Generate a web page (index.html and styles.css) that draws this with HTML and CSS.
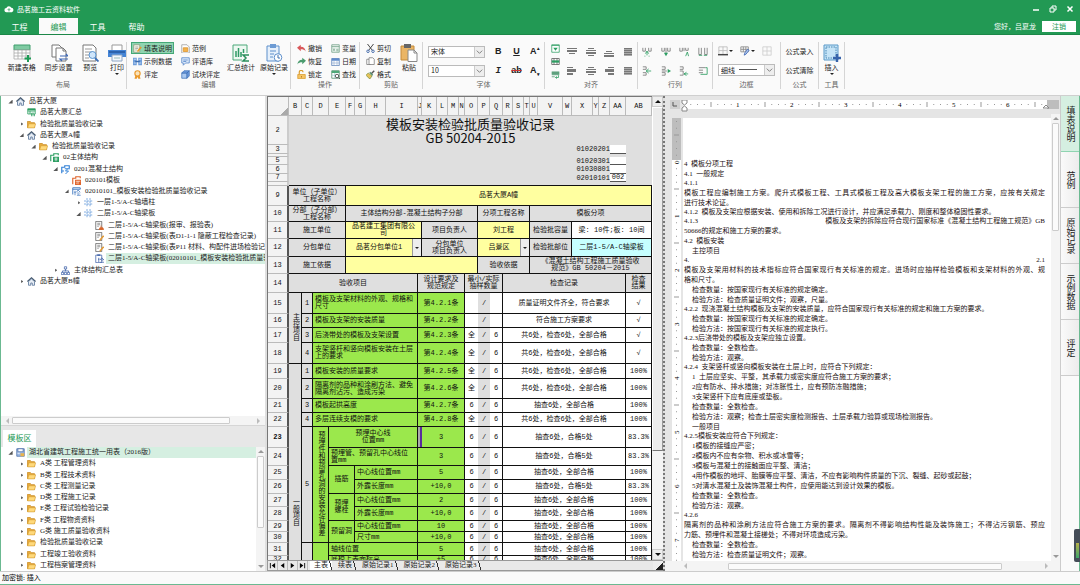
FILE: index.html
```html
<!DOCTYPE html>
<html lang="zh-CN">
<head>
<meta charset="UTF-8">
<meta name="viewport" content="width=device-width, initial-scale=1.0">
<title>品茗施工云资料软件</title>
<link rel="stylesheet" href="styles.css">
</head>
<body>
<svg class="sprite" width="0" height="0" aria-hidden="true">
  <symbol id="i-table" viewBox="0 0 18 18"><path d="M1 1h16v5H1z" fill="#7fcaa2" stroke="#3f9e6c"/><path d="M1 6h16v9H1zM5 6v9M9 6v9M13 6v9M1 9h16M1 12h16" fill="#fff" stroke="#aaa" stroke-width=".8"/><path d="M15 11v7M11.500 14.500h7" stroke="#1d9a55" stroke-width="2"/></symbol>
  <symbol id="i-sync" viewBox="0 0 18 18"><path d="M2 1h7l3 3v9H2z" fill="#fff" stroke="#777"/><path d="M6 4h7l3 3v10H6z" fill="#fff" stroke="#777"/><path d="M13 4v3h3" fill="none" stroke="#777"/><path d="M10 12h8l-2-2M18 15h-8l2 2" fill="none" stroke="#3c66b4" stroke-width="1.200"/></symbol>
  <symbol id="i-preview" viewBox="0 0 18 18"><path d="M2 1h10l3 3v13H2z" fill="#fff" stroke="#777"/><path d="M4 5h7M4 8h8M4 11h5M4 14h4" stroke="#999"/><circle cx="11.500" cy="11" r="3.500" fill="#cfe5fa" stroke="#5a95d2"/><path d="M14 14l3.500 3.500" stroke="#3c70b8" stroke-width="1.800"/></symbol>
  <symbol id="i-print" viewBox="0 0 18 18"><path d="M4 1h10v6H4z" fill="#fff" stroke="#999"/><path d="M0 6h18v7H0z" fill="#4585d6"/><path d="M1 7h16v2H1z" fill="#2d63ad"/><path d="M4 11h10v6H4z" fill="#f4f8fd" stroke="#8ea6c4"/><path d="M6 14h6" stroke="#9bb"/></symbol>
  <symbol id="i-stat" viewBox="0 0 18 18"><path d="M1 1h14v15H1z" fill="#eef8f2" stroke="#4aa878"/><path d="M4 13V7M6.500 13V4M9 13V8M11.500 9V5" stroke="#2f9a65" stroke-width="1.500"/><path d="M10 9h8v9h-8z" fill="#fafafa"/><path d="M17 11h-6l3 3-3 3h6" fill="none" stroke="#2a8f5b" stroke-width="1.500"/></symbol>
  <symbol id="i-clip" viewBox="0 0 18 18"><path d="M2 2h12v15H2z" fill="#e6f0fb" stroke="#5d8fcb"/><path d="M5 0h6v4H5z" fill="#6c9bd4"/><path d="M5 7h6M5 10h4M5 13h3" stroke="#5d8fcb"/><circle cx="13" cy="13.500" r="3.800" fill="#fff" stroke="#5d8fcb"/><path d="M13 11v3h2" fill="none" stroke="#3b6eae"/></symbol>
  <symbol id="i-paste" viewBox="0 0 18 18"><path d="M1 2h13v14H1z" fill="#eab565" stroke="#c48a3a"/><path d="M4 0h7v4H4z" fill="#666"/><path d="M8 6h6l3 3v8.500H8z" fill="#fff" stroke="#888"/><path d="M14 6v3h3" fill="none" stroke="#888"/></symbol>
  <symbol id="i-insert" viewBox="0 0 18 18"><path d="M1 1h14v15H1z" fill="#c5e4f7" stroke="#5898c8"/><path d="M3 3h10v11H3z" fill="none" stroke="#4b88b5" stroke-dasharray="1.500 1"/><path d="M14 10v8M10 14h8" stroke="#3864ab" stroke-width="2.400"/></symbol>
  <symbol id="i-note" viewBox="0 0 12 12"><path d="M1 1h8v10H1z" fill="#f6f6e8" stroke="#8b9a7e"/><path d="M3 4h4M3 6h4M3 8h2" stroke="#999"/><path d="M11 4l-5 6" stroke="#e59a2c" stroke-width="2"/></symbol>
  <symbol id="i-sample" viewBox="0 0 12 12"><path d="M0 1h5v10H0zM7 1h5v10H7z" fill="#6f9edb"/><path d="M1 3h3M1 8h3M8 3h3M8 8h3" stroke="#dce9fa"/><path d="M3 6h6" stroke="#3c6db0" stroke-width="2"/></symbol>
  <symbol id="i-medal" viewBox="0 0 12 12"><circle cx="6" cy="4.500" r="3.500" fill="#fbe3b8" stroke="#e9982b" stroke-width="1.500"/><path d="M3 8L2 11.500h3L6 9l1 2.500h3L9 8" fill="#e9982b"/></symbol>
  <symbol id="i-example" viewBox="0 0 12 12"><path d="M1 1h7l3 3v8H1z" fill="#fff" stroke="#999"/><path d="M3 5h6v5H3z" fill="#f3b24a" stroke="#d98f26"/></symbol>
  <symbol id="i-comment" viewBox="0 0 12 12"><path d="M1 1h10v7H6l-3 3V8H1z" fill="#dce9fa" stroke="#4c7fc4"/><path d="M3 4h6M3 6h4" stroke="#4c7fc4"/></symbol>
  <symbol id="i-cube" viewBox="0 0 12 12"><path d="M1 4h7v7H1z" fill="#a9c8f0" stroke="#3f70b5"/><path d="M1 4l3-3h7L8 4zM8 4l3-3v7l-3 3z" fill="#6c9ade" stroke="#3f70b5"/></symbol>
  <symbol id="i-undo" viewBox="0 0 12 12"><path d="M0 5l5-4v2.500c4 0 6 2 6.500 6.500C10 7.500 8 7 5 7v2.500z" fill="#d9585a"/></symbol>
  <symbol id="i-redo" viewBox="0 0 12 12"><path d="M12 5L7 1v2.500C3 3.500 1 5.500.500 10 2 7.500 4 7 7 7v2.500z" fill="#4a9b6e"/></symbol>
  <symbol id="i-lock" viewBox="0 0 12 12"><path d="M3 6V3a2.500 2.500 0 0 1 5 0" fill="none" stroke="#d99a2b" stroke-width="1.500"/><path d="M1 6h10v5.500H1z" fill="#f6c464" stroke="#d99a2b"/><path d="M6 8v2" stroke="#a86c10"/></symbol>
  <symbol id="i-var" viewBox="0 0 12 12"><path d="M1 1h10v10H1z" fill="#eef6f1" stroke="#6a9c80"/><path d="M1 3.500h10" stroke="#6a9c80"/><path d="M3 6l2 3M5 6L3 9M7 7h3M7 9h3" stroke="#4d8867" stroke-width=".8"/></symbol>
  <symbol id="i-date" viewBox="0 0 12 12"><path d="M1 2h10v9.500H1z" fill="#fff" stroke="#4e77b3"/><path d="M1 2h10v3H1z" fill="#5f8bcb"/><path d="M4 5v6M8 5v6M1 8h10" stroke="#8aa6cf" stroke-width=".8"/></symbol>
  <symbol id="i-find" viewBox="0 0 12 12"><path d="M1 1h10v10H1z" fill="#fff" stroke="#4d8867"/><path d="M1 1h10v3H1z" fill="#4fa878"/><path d="M1 7h10M5 4v7" stroke="#9cc"/><circle cx="8" cy="8" r="2.300" fill="#fff" stroke="#333"/><path d="M10 10l2 2" stroke="#333"/></symbol>
  <symbol id="i-cut" viewBox="0 0 12 12"><path d="M2 0l6.500 8.500M10 0L3.500 8.500" stroke="#444" stroke-width="1.300"/><circle cx="2.700" cy="9.700" r="1.700" fill="none" stroke="#3e67a8" stroke-width="1.200"/><circle cx="9.300" cy="9.700" r="1.700" fill="none" stroke="#3e67a8" stroke-width="1.200"/></symbol>
  <symbol id="i-copy" viewBox="0 0 12 12"><path d="M1 3h5v7H1z" fill="#fff" stroke="#777"/><path d="M4 1h5l2 2v7H4z" fill="#fff" stroke="#777"/></symbol>
  <symbol id="i-brush" viewBox="0 0 12 12"><path d="M11 1L7 5" stroke="#555" stroke-width="2"/><path d="M3 4l5 4-3 4-5-5z" fill="#e8c35a" stroke="#7a8f3c"/><path d="M5 3l4 4" stroke="#4d8867" stroke-width="1.500"/></symbol>
  <symbol id="i-fit" viewBox="0 0 12 12"><path d="M1 1h10v10H1z" fill="#fff" stroke="#2c9e62"/><path d="M1 2h10" stroke="#2c9e62"/><path d="M3 5h6L6 9z" fill="#2c9e62"/></symbol>
  <symbol id="i-merge" viewBox="0 0 12 12"><path d="M1 2h10v8H1zM4 2v8M8 2v8" fill="#fff" stroke="#555"/><path d="M1 4.500h10v3H1z" fill="#2c9e62"/></symbol>
  <symbol id="i-wrap" viewBox="0 0 12 12"><path d="M1 2h10v5H1z" fill="#79b697"/><path d="M1 3h10M1 5h10M1 9h4" stroke="#4b8f6b"/><path d="M10 7v3H6l2-1.500M6 10l2 1.500" fill="none" stroke="#2c9e62"/></symbol>
  <symbol id="i-al-top" viewBox="0 0 10 10"><path d="M0 1h10v1H0zM0 3h10v2H0zM2 6h6v1H2z" fill="#777"/></symbol>
  <symbol id="i-al-mid" viewBox="0 0 10 10"><path d="M2 1h6v1H2zM0 3h10v1H0zM0 5h10v2H0zM2 8h6v1H2z" fill="#777"/></symbol>
  <symbol id="i-al-bot" viewBox="0 0 10 10"><path d="M2 4h6v1H2zM0 6h10v1H0zM0 8h10v2H0z" fill="#777"/></symbol>
  <symbol id="i-al-all" viewBox="0 0 10 10"><path d="M1 1h8v8H1z" fill="#aaa"/><path d="M1 1.500h8M1 3.500h8M1 5.500h8M1 7.500h8" stroke="#777"/></symbol>
  <symbol id="i-al-left" viewBox="0 0 10 10"><path d="M0 1h6v1H0zM0 3h9v3H0zM0 7h6v2H0z" fill="#777"/></symbol>
  <symbol id="i-al-right" viewBox="0 0 10 10"><path d="M4 1h6v1H4zM1 3h9v3H1zM4 7h6v2H4z" fill="#777"/></symbol>
  <symbol id="i-col-a" viewBox="0 0 12 12"><path d="M1 1v4h3V1M8 1v4h3V1" fill="none" stroke="#777"/><path d="M6 5v5M4 8l2-3 2 3M3 11h1M8 11h1" fill="none" stroke="#2c9e62"/></symbol>
  <symbol id="i-col-b" viewBox="0 0 12 12"><path d="M1 1v4h3V1M8 1v4h3V1" fill="none" stroke="#777"/><path d="M6 1v7" stroke="#777"/><path d="M3.500 7h5L6 11z" fill="#2c9e62"/></symbol>
  <symbol id="i-col-c" viewBox="0 0 12 12"><path d="M1 1v4h3V1M6 1v4M8 1v3h3V1" fill="none" stroke="#777"/><path d="M8 11l2-5 1.500 5" fill="none" stroke="#2c9e62"/></symbol>
  <symbol id="i-col-d" viewBox="0 0 12 12"><path d="M1 1v8h3V1M8 1v8h3V1" fill="none" stroke="#777"/><path d="M1 10h4M7 10h4" stroke="#2c9e62"/></symbol>
  <symbol id="i-row-a" viewBox="0 0 12 12"><path d="M1 1h4v3H1M1 8h4v3H1" fill="none" stroke="#777"/><path d="M11 6H5M8 3.500L5 6l3 2.500" fill="none" stroke="#2c9e62"/></symbol>
  <symbol id="i-row-b" viewBox="0 0 12 12"><path d="M1 1h4v3H1M1 8h4v3H1M1 6h6" fill="none" stroke="#777"/><path d="M8 3.500v5l4-2.500z" fill="#2c9e62"/></symbol>
  <symbol id="i-row-c" viewBox="0 0 12 12"><path d="M1 1h4v3H1M1 6h4v5H1" fill="none" stroke="#777"/><path d="M11 9.500H6l3-2M6 9.500l3 2" fill="none" stroke="#2c9e62"/></symbol>
  <symbol id="i-row-d" viewBox="0 0 12 12"><path d="M1 2h8M1 5h5M1 8h5" stroke="#777"/><path d="M9 2h2v8H3" fill="none" stroke="#2c9e62"/></symbol>
  <symbol id="i-border" viewBox="0 0 12 12"><path d="M1 1h10v9H1zM6 1v9M1 5.500h10" fill="none" stroke="#bbb"/><path d="M0 10.500h12" stroke="#333" stroke-width="1.500"/></symbol>
  <symbol id="i-pen" viewBox="0 0 12 12"><path d="M1 1h9v6H1zM1 4h9M4 1v6M7 1v6" fill="none" stroke="#888"/><path d="M11 5l-4 5-2 1 1-3 3-4z" fill="#b8cdf2" stroke="#3c66b4"/></symbol>
  <symbol id="i-noborder" viewBox="0 0 12 12"><path d="M1 1h10v10H1zM6 1v10M1 6h10" fill="none" stroke="#ccc"/></symbol>
  <symbol id="i-cloud" viewBox="0 0 12 10"><path d="M3 9a2.600 2.600 0 0 1-.300-5.200A3.400 3.400 0 0 1 9 3.500 2.800 2.800 0 0 1 9.500 9z" fill="#fff"/><path d="M6 8V5M4.500 6L6 4.500 7.500 6" fill="none" stroke="#229954"/></symbol>
  <symbol id="t-home" viewBox="0 0 12 12"><path d="M.500 6L6 1l5.500 5" fill="none" stroke="#4b5d70" stroke-width="1.500"/><path d="M2 6v5h3V8h2v3h3V6L6 2.500z" fill="#e8eef5" stroke="#4b6a90"/></symbol>
  <symbol id="t-sum" viewBox="0 0 12 12"><path d="M1 1h10v7H1zM1 4h10M4 4v4" fill="#dff3e8" stroke="#2c9e62"/><path d="M1 1h10v2H1z" fill="#2c9e62"/><path d="M6 7v4M8 6v5M10 8v3" stroke="#2c9e62"/></symbol>
  <symbol id="t-folder" viewBox="0 0 12 12"><path d="M.500 2h4l1 1.500H10V10H.500z" fill="#e9ab3c" stroke="#c98a22"/><path d="M2.500 5h9L10 10.500H.800z" fill="#ffd97b" stroke="#d39a2e" stroke-width=".8"/></symbol>
  <symbol id="t-g" viewBox="0 0 12 12"><path d="M1 11V3h4V1h6v2" fill="none" stroke="#2c9e62" stroke-width="1.500"/><path d="M4 5h8v7H4z" fill="#2c9e62"/><path d="M6 7h4M6 9h4M8 6v5" stroke="#fff" stroke-width=".8"/></symbol>
  <symbol id="t-b" viewBox="0 0 12 12"><path d="M1 11V3h4V1h6v3M1 8h3" fill="none" stroke="#2f7fd6" stroke-width="1.500"/><path d="M5 5h7M9 5L6 8h4l-4 4" fill="none" stroke="#2f7fd6" stroke-width="1.300"/></symbol>
  <symbol id="t-o" viewBox="0 0 12 12"><path d="M1 11V3h4V1h6v2" fill="none" stroke="#e0642b" stroke-width="1.500"/><path d="M4 5h8v7H4z" fill="#e0642b"/><path d="M5 7h6M8 7v4M5.500 9.500h1" stroke="#fff" stroke-width=".9"/></symbol>
  <symbol id="t-check" viewBox="0 0 12 12"><path d="M1 10V1h10v2M1 3h10" fill="none" stroke="#3b74bd" stroke-width="1.200"/><path d="M4 5v6M3 7h2M8 4L6 7M8 4l3 3M7 8h3M6.500 11h5M7 9l1 1M10 9l-1 1" fill="none" stroke="#3b74bd"/></symbol>
  <symbol id="t-axis" viewBox="0 0 12 12"><path d="M0 4h12M0 8h12M4 0v12M8 0v12" stroke="#5f97d8" stroke-dasharray="3 1"/></symbol>
  <symbol id="t-rep" viewBox="0 0 12 12"><path d="M1 .500h8v11H1z" fill="#fff" stroke="#555"/><path d="M3 3h4M3 5h4M3 7h2" stroke="#777"/><path d="M8 6v3M5.500 11.500l1-2.500h4l1 2.500z" fill="#d9662b" stroke="#d9662b"/></symbol>
  <symbol id="t-doc" viewBox="0 0 12 12"><path d="M1 .500h8v11H1z" fill="#fff" stroke="#555"/><path d="M3 3h4M3 5h4M3 7h2" stroke="#777"/><path d="M11.500 5L6.500 11" stroke="#e39a35" stroke-width="2"/></symbol>
  <symbol id="t-blue" viewBox="0 0 12 12"><path d="M1 1.500h8v10H1z" fill="#fff" stroke="#3f62a8"/><path d="M3 .500h4v2H3z" fill="#3f62a8"/><path d="M5 5v6M4 7h2M9 5L7 8M9 5l3 3M8 8h3M7 11h5" stroke="#3f62a8"/></symbol>
  <symbol id="t-org" viewBox="0 0 12 12"><path d="M6 4v3M2 9V6.500h8V9" fill="none" stroke="#3f62a8"/><path d="M4.500 1h3v3h-3zM.500 8.500h3v3h-3zM4.500 8.500h3v3h-3zM8.500 8.500h3v3h-3z" fill="#fff" stroke="#3f62a8"/></symbol>
  <symbol id="t-disk" viewBox="0 0 12 12"><path d="M1 1h10v10H1z" fill="#9fbbe4" stroke="#4a6ea8"/><path d="M2.500 1h7v4h-7z" fill="#fff" stroke="#4a6ea8"/><path d="M6 7h5v4H6z" fill="#e9b34a"/><path d="M2 7h3" stroke="#fff"/></symbol>
</svg>

<header class="top">
  <div class="titlebar">
    <svg class="ico cloud"><use href="#i-cloud"/></svg>
    <span class="app-name">品茗施工云资料软件</span>
    <div class="win-buttons">
      <button aria-label="最小化"><svg viewBox="0 0 8 8"><path d="M1 5h6" stroke="#fff" stroke-width="1.500"/></svg></button>
      <button aria-label="还原"><svg viewBox="0 0 8 8"><path d="M3 3V1h4v4H5M1 3h4v4H1z" fill="none" stroke="#fff"/></svg></button>
      <button aria-label="关闭"><svg viewBox="0 0 8 8"><path d="M1.500 1.500l5 5M6.500 1.500l-5 5" stroke="#fff" stroke-width="1.500"/></svg></button>
    </div>
  </div>
  <nav class="menu">
    <a href="#">工程</a>
    <a href="#" class="active">编辑</a>
    <a href="#">工具</a>
    <a href="#">帮助</a>
    <div class="user">
      <span>您好，吕夏龙</span>
      <button class="logout">注销</button>
    </div>
  </nav>
</header>

<section class="ribbon">
  <div class="group g-layout">
    <div class="tools">
      <button class="big"><svg><use href="#i-table"/></svg>新建表格</button>
      <button class="big"><svg><use href="#i-sync"/></svg>同步设置</button>
      <button class="big"><svg><use href="#i-preview"/></svg>预览</button>
      <button class="big"><svg><use href="#i-print"/></svg>打印<i class="caret"></i></button>
    </div>
    <div class="group-name">布局</div>
  </div>
  <div class="group g-edit">
    <div class="tools">
      <div class="stack">
        <button class="small on"><svg><use href="#i-note"/></svg>填表说明</button>
        <button class="small"><svg><use href="#i-sample"/></svg>示例数据</button>
        <button class="small"><svg><use href="#i-medal"/></svg>评定</button>
      </div>
      <div class="stack">
        <button class="small"><svg><use href="#i-example"/></svg>范例</button>
        <button class="small"><svg><use href="#i-comment"/></svg>评语库</button>
        <button class="small"><svg><use href="#i-cube"/></svg>试块评定</button>
      </div>
      <button class="big"><svg><use href="#i-stat"/></svg>汇总统计</button>
      <button class="big"><svg><use href="#i-clip"/></svg>原始记录<i class="caret"></i></button>
    </div>
    <div class="group-name">编辑</div>
  </div>
  <div class="group g-action">
    <div class="tools">
      <div class="stack">
        <button class="small"><svg><use href="#i-undo"/></svg>撤销</button>
        <button class="small"><svg><use href="#i-redo"/></svg>恢复</button>
        <button class="small"><svg><use href="#i-lock"/></svg>锁定</button>
      </div>
      <div class="stack">
        <button class="small"><svg><use href="#i-var"/></svg>变量</button>
        <button class="small"><svg><use href="#i-date"/></svg>日期</button>
        <button class="small"><svg><use href="#i-find"/></svg>查找</button>
      </div>
    </div>
    <div class="group-name">操作</div>
  </div>
  <div class="group g-clip">
    <div class="tools">
      <div class="stack">
        <button class="small"><svg><use href="#i-cut"/></svg>剪切</button>
        <button class="small"><svg><use href="#i-copy"/></svg>复制</button>
        <button class="small"><svg><use href="#i-brush"/></svg>格式</button>
      </div>
      <button class="big"><svg><use href="#i-paste"/></svg>粘贴</button>
    </div>
    <div class="group-name">剪贴</div>
  </div>
  <div class="group g-font">
    <div class="tools">
      <div class="pair">
        <span class="select"><select aria-label="字体"><option>宋体</option></select><svg viewBox="0 0 10 10"><path d="M2 3.500l3 3 3-3" fill="none" stroke="#777"/></svg></span>
        <span class="select"><select aria-label="字号"><option>10</option></select><svg viewBox="0 0 10 10"><path d="M2 3.500l3 3 3-3" fill="none" stroke="#777"/></svg></span>
      </div>
      <div class="icons three">
        <button class="letter">B</button>
        <button class="letter"><u>U</u></button>
        <button class="letter">A<sup>▴</sup></button>
        <button class="letter"><i>I</i></button>
        <button class="letter"><s>ab</s></button>
        <button class="letter">A<sub>▾</sub></button>
      </div>
    </div>
    <div class="group-name">字体</div>
  </div>
  <div class="group g-align">
    <div class="tools">
      <div class="stack">
        <button class="small" aria-label="缩小填充"><svg><use href="#i-fit"/></svg></button>
        <button class="small" aria-label="合并"><svg><use href="#i-merge"/></svg></button>
        <button class="small" aria-label="换行"><svg><use href="#i-wrap"/></svg></button>
      </div>
      <div class="icons four">
        <button aria-label="顶端"><svg><use href="#i-al-top"/></svg></button>
        <button aria-label="垂直居中"><svg><use href="#i-al-mid"/></svg></button>
        <button aria-label="底端"><svg><use href="#i-al-bot"/></svg></button>
        <button aria-label="分散"><svg><use href="#i-al-all"/></svg></button>
        <button aria-label="左对齐"><svg><use href="#i-al-left"/></svg></button>
        <button aria-label="居中"><svg><use href="#i-al-mid"/></svg></button>
        <button aria-label="右对齐"><svg><use href="#i-al-right"/></svg></button>
        <button aria-label="两端"><svg><use href="#i-al-all"/></svg></button>
      </div>
    </div>
    <div class="group-name">对齐</div>
  </div>
  <div class="group g-rows">
    <div class="tools">
      <div class="icons four">
        <button aria-label="插入列"><svg><use href="#i-col-a"/></svg></button>
        <button aria-label="追加列"><svg><use href="#i-col-b"/></svg></button>
        <button aria-label="删除列"><svg><use href="#i-col-c"/></svg></button>
        <button aria-label="列宽"><svg><use href="#i-col-d"/></svg></button>
        <button aria-label="插入行"><svg><use href="#i-row-a"/></svg></button>
        <button aria-label="追加行"><svg><use href="#i-row-b"/></svg></button>
        <button aria-label="删除行"><svg><use href="#i-row-c"/></svg></button>
        <button aria-label="行高"><svg><use href="#i-row-d"/></svg></button>
      </div>
    </div>
    <div class="group-name">行列</div>
  </div>
  <div class="group g-border">
    <div class="tools">
      <div class="pair">
        <div class="border-buttons">
          <button aria-label="边框"><svg><use href="#i-border"/></svg><i class="caret"></i></button>
          <button aria-label="画笔"><svg><use href="#i-pen"/></svg><i class="caret"></i></button>
          <button aria-label="无边框"><svg><use href="#i-noborder"/></svg></button>
        </div>
        <span class="select line"><select aria-label="线型"><option>细线</option></select><i class="stroke"></i><svg viewBox="0 0 10 10"><path d="M2 3.500l3 3 3-3" fill="none" stroke="#777"/></svg></span>
      </div>
    </div>
    <div class="group-name">边框</div>
  </div>
  <div class="group g-formula">
    <div class="tools">
      <div class="pair">
        <button class="text">公式录入</button>
        <button class="text">公式清除</button>
      </div>
    </div>
    <div class="group-name">公式</div>
  </div>
  <div class="group g-tool">
    <div class="tools">
      <button class="big"><svg><use href="#i-insert"/></svg>插入<i class="caret"></i></button>
    </div>
    <div class="group-name">工具</div>
  </div>
</section>

<main class="work">
  <aside class="left">
    <div class="project">
      <ul class="tree project-tree">
        <li><i class="arrow open"></i><svg><use href="#t-home"/></svg><a href="#">品茗大厦</a></li>
        <li class="l1"><i class="arrow none"></i><svg><use href="#t-sum"/></svg><a href="#">品茗大厦汇总</a></li>
        <li class="l1"><i class="arrow"></i><svg><use href="#t-folder"/></svg><a href="#">检验批质量验收记录</a></li>
        <li class="l1"><i class="arrow open"></i><svg><use href="#t-home"/></svg><a href="#">品茗大厦A幢</a></li>
        <li class="l2"><i class="arrow open"></i><svg><use href="#t-folder"/></svg><a href="#">检验批质量验收记录</a></li>
        <li class="l3"><i class="arrow open"></i><svg><use href="#t-g"/></svg><a href="#">02主体结构</a></li>
        <li class="l4"><i class="arrow open"></i><svg><use href="#t-b"/></svg><a href="#">0201混凝土结构</a></li>
        <li class="l5"><i class="arrow none"></i><svg><use href="#t-o"/></svg><a href="#">020101模板</a></li>
        <li class="l5"><i class="arrow open"></i><svg><use href="#t-check"/></svg><a href="#">02010101_模板安装检验批质量验收记录</a></li>
        <li class="l6"><i class="arrow"></i><svg><use href="#t-axis"/></svg><a href="#">一层1-5/A-C轴墙柱</a></li>
        <li class="l6"><i class="arrow open"></i><svg><use href="#t-axis"/></svg><a href="#">二层1-5/A-C轴梁板</a></li>
        <li class="l7"><i class="arrow none"></i><svg><use href="#t-rep"/></svg><a href="#">二层1-5/A-C轴梁板(报审、报验表)</a></li>
        <li class="l7"><i class="arrow none"></i><svg><use href="#t-doc"/></svg><a href="#">二层1-5/A-C轴梁板(表D1-1-1 隐蔽工程检查记录)</a></li>
        <li class="l7"><i class="arrow none"></i><svg><use href="#t-doc"/></svg><a href="#">二层1-5/A-C轴梁板(表P11 材料、构配件进场检验记录)</a></li>
        <li class="l7 selected"><i class="arrow none"></i><svg><use href="#t-blue"/></svg><a href="#">二层1-5/A-C轴梁板(02010101_模板安装检验批质量验收)</a></li>
        <li class="l4"><i class="arrow"></i><svg><use href="#t-org"/></svg><a href="#">主体结构汇总表</a></li>
        <li class="l1"><i class="arrow"></i><svg><use href="#t-home"/></svg><a href="#">品茗大厦B幢</a></li>
      </ul>
      <div class="hscroll"><i class="tri west"></i><span class="thumb"></span><i class="tri east"></i></div>
    </div>
    <div class="template">
      <div class="panel-tab"><a href="#">模板区</a></div>
      <div class="template-body">
        <ul class="tree template-tree">
          <li class="selected"><i class="arrow open"></i><svg><use href="#t-disk"/></svg><a href="#">湖北省建筑工程施工统一用表（2016版）</a></li>
          <li class="l1"><i class="arrow"></i><svg><use href="#t-folder"/></svg><a href="#">A类 工程管理资料</a></li>
          <li class="l1"><i class="arrow"></i><svg><use href="#t-folder"/></svg><a href="#">B类 工程技术资料</a></li>
          <li class="l1"><i class="arrow"></i><svg><use href="#t-folder"/></svg><a href="#">C类 工程测量记录</a></li>
          <li class="l1"><i class="arrow"></i><svg><use href="#t-folder"/></svg><a href="#">D类 工程施工记录</a></li>
          <li class="l1"><i class="arrow"></i><svg><use href="#t-folder"/></svg><a href="#">E类 工程试验检验记录</a></li>
          <li class="l1"><i class="arrow"></i><svg><use href="#t-folder"/></svg><a href="#">F类 工程物资资料</a></li>
          <li class="l1"><i class="arrow"></i><svg><use href="#t-folder"/></svg><a href="#">G类 施工质量验收资料</a></li>
          <li class="l1"><i class="arrow"></i><svg><use href="#t-folder"/></svg><a href="#">检验批质量验收记录</a></li>
          <li class="l1"><i class="arrow"></i><svg><use href="#t-folder"/></svg><a href="#">工程竣工验收资料</a></li>
          <li class="l1"><i class="arrow"></i><svg><use href="#t-folder"/></svg><a href="#">工程档案管理资料</a></li>
        </ul>
        <div class="vscroll"><i class="tri north"></i><span class="thumb"></span><i class="tri south"></i></div>
      </div>
    </div>
  </aside>

  <section class="sheet">
    <div class="sheet-view">
      <div class="sheet-clip">
        <table class="grid">
          <colgroup>
            <col class="w21"><col class="w13"><col class="w11"><col class="w16"><col class="w17"><col class="w9"><col class="w11"><col class="w20"><col class="w32"><col class="w4"><col class="w15"><col class="w11"><col class="w11"><col class="w6"><col class="w13"><col class="w12"><col class="w13"><col class="w10"><col class="w11"><col class="w6"><col class="w8"><col class="w25"><col class="w9"><col class="w21"><col class="w6"><col class="w11"><col class="w16"><col class="w26">
          </colgroup>
          <tr class="letters h19"><th class="corner"></th><th>B</th><th>C</th><th>D</th><th>E</th><th>F</th><th>G</th><th>H</th><th>I</th><th>J</th><th>K</th><th>L</th><th>M</th><th>N</th><th>O</th><th>P</th><th>Q</th><th>R</th><th>S</th><th>T</th><th>U</th><th>V</th><th>W</th><th>X</th><th>Y</th><th>Z</th><th>AA</th><th>AB</th></tr>
          <tr class="plain h29"><th>2</th><td colspan="27" class="title">模板安装检验批质量验收记录<br>GB 50204-2015</td></tr>
          <tr class="plain h9"><th>3</th><td colspan="22"></td><td colspan="3">01020201</td><td class="box"></td><td></td></tr>
          <tr class="plain h3"><th></th><td colspan="27"></td></tr>
          <tr class="plain h8"><th>5</th><td colspan="22"></td><td colspan="3">01020301</td><td class="box"></td><td></td></tr>
          <tr class="plain h9"><th>6</th><td colspan="22"></td><td colspan="3">01030801</td><td class="box"></td><td></td></tr>
          <tr class="plain h8"><th>7</th><td colspan="22"></td><td colspan="3">02010101</td><td class="box">002</td><td></td></tr>
          <tr class="plain h4 last"><th></th><td colspan="27"></td></tr>
          <tr class="h20"><th>9</th><td colspan="4">单位（子单位）<br>工程名称</td><td colspan="23" class="yellow">品茗大厦A幢</td></tr>
          <tr class="h16"><th>10</th><td colspan="4">分部（子分部）<br>工程名称</td><td colspan="10">主体结构分部-混凝土结构子分部</td><td colspan="5">分项工程名称</td><td colspan="8">模板分项</td></tr>
          <tr class="h17"><th>11</th><td colspan="4">施工单位</td><td colspan="5" class="yellow">品茗建工集团有限公<br>司</td><td colspan="5">项目负责人</td><td colspan="5" class="yellow">刘工程</td><td colspan="3">检验批容量</td><td colspan="5" class="white">梁: 10件;板: 10间</td></tr>
          <tr class="h18"><th>12</th><td colspan="4">分包单位</td><td colspan="5" class="yellow"><div class="combo"><span>品茗分包单位1</span><button aria-label="选择分包单位"><i class="caret"></i></button></div></td><td colspan="5">分包单位<br>项目负责人</td><td colspan="5" class="yellow"><div class="combo"><span>吕景区</span><button aria-label="选择负责人"><i class="caret"></i></button></div></td><td colspan="3">检验批部位</td><td colspan="5" class="cyan">二层1-5/A-C轴梁板</td></tr>
          <tr class="h17"><th>13</th><td colspan="4">施工依据</td><td colspan="10" class="yellow"></td><td colspan="5">验收依据</td><td colspan="8">《混凝土结构工程施工质量验收<br>规范》GB 50204－2015</td></tr>
          <tr class="h19"><th>14</th><td colspan="8">验收项目</td><td colspan="5">设计要求及<br>规范规定</td><td colspan="3">最小/实际<br>抽样数量</td><td colspan="10">检查记录</td><td>检查<br>结果</td></tr>
          <tr class="h21"><th>15</th><td rowspan="4"><span class="upright">主控项目</span></td><td>1</td><td colspan="6" class="item">模板及支架材料的外观、规格和<br>尺寸</td><td colspan="5" class="green">第4.2.1条</td><td class="num"></td><td class="slash">/</td><td class="white"></td><td colspan="10" class="white">质量证明文件齐全，符合要求</td><td class="white">√</td></tr>
          <tr class="h14"><th>16</th><td>2</td><td colspan="6" class="item">模板及支架的安装质量</td><td colspan="5" class="green">第4.2.2条</td><td class="num"></td><td class="slash">/</td><td class="white"></td><td colspan="10" class="white">符合施工方案要求</td><td class="white">√</td></tr>
          <tr class="h15"><th>17</th><td>3</td><td colspan="6" class="item">后浇带处的模板及支架设置</td><td colspan="5" class="green">第4.2.3条</td><td class="num">全</td><td class="slash">/</td><td class="white">6</td><td colspan="10" class="white">共6处，检查6处，全部合格</td><td class="white">√</td></tr>
          <tr class="h21"><th>18</th><td>4</td><td colspan="6" class="item">支架竖杆和竖向模板安装在土层<br>上的要求</td><td colspan="5" class="green">第4.2.4条</td><td class="num">全</td><td class="slash">/</td><td class="white">6</td><td colspan="10" class="white">共6处，检查6处，全部合格</td><td class="white">√</td></tr>
          <tr class="h15"><th>19</th><td rowspan="14" class="general"><span class="upright">一般项目</span></td><td>1</td><td colspan="6" class="item">模板安装的质量要求</td><td colspan="5" class="green">第4.2.5条</td><td class="num">全</td><td class="slash">/</td><td class="white">6</td><td colspan="10" class="white">共6处，检查6处，全部合格</td><td class="white">100%</td></tr>
          <tr class="h20"><th>20</th><td>2</td><td colspan="6" class="item">隔离剂的品种和涂刷方法、避免<br>隔离剂沾污、造成污染</td><td colspan="5" class="green">第4.2.6条</td><td class="num">全</td><td class="slash">/</td><td class="white">6</td><td colspan="10" class="white">共6处，检查6处，全部合格</td><td class="white">100%</td></tr>
          <tr class="h14"><th>21</th><td>3</td><td colspan="6" class="item">模板起拱高度</td><td colspan="5" class="green">第4.2.7条</td><td class="num">6</td><td class="slash">/</td><td class="white">6</td><td colspan="10" class="white">抽查6处，全部合格</td><td class="white">100%</td></tr>
          <tr class="h14"><th>22</th><td>4</td><td colspan="6" class="item">多层连续支模的要求</td><td colspan="5" class="green">第4.2.8条</td><td class="num">全</td><td class="slash">/</td><td class="white">6</td><td colspan="10" class="white">共6处，检查6处，全部合格</td><td class="white">100%</td></tr>
          <tr class="h21"><th class="current">23</th><td rowspan="8">5</td><td rowspan="8" class="green"><span class="upright">预埋件和预留孔洞的安装允许偏差</span></td><td colspan="5" class="green">预埋中心线<br>位置mm</td><td colspan="5" class="green cursor">3</td><td class="num">6</td><td class="slash">/</td><td class="white">6</td><td colspan="10" class="white">抽查6处，合格5处</td><td class="white">83.3%</td></tr>
          <tr class="h18"><th>24</th><td colspan="5" class="item">预埋管、预留孔中心线位<br>置mm</td><td colspan="5" class="green">3</td><td class="num">6</td><td class="slash">/</td><td class="white">6</td><td colspan="10" class="white">抽查6处，合格5处</td><td class="white">83.3%</td></tr>
          <tr class="h14"><th>25</th><td rowspan="2" colspan="2" class="green">插筋</td><td colspan="3" class="item">中心线位置mm</td><td colspan="5" class="green">5</td><td class="num">6</td><td class="slash">/</td><td class="white">6</td><td colspan="10" class="white">抽查6处，全部合格</td><td class="white">100%</td></tr>
          <tr class="h14"><th>26</th><td colspan="3" class="item">外露长度mm</td><td colspan="5" class="green">+10,0</td><td class="num">6</td><td class="slash">/</td><td class="white">6</td><td colspan="10" class="white">抽查6处，合格5处</td><td class="white">83.3%</td></tr>
          <tr class="h13"><th>27</th><td rowspan="2" colspan="2" class="green">预埋<br>螺栓</td><td colspan="3" class="item">中心线位置mm</td><td colspan="5" class="green">2</td><td class="num">6</td><td class="slash">/</td><td class="white">6</td><td colspan="10" class="white">抽查6处，全部合格</td><td class="white">100%</td></tr>
          <tr class="h14"><th>28</th><td colspan="3" class="item">外露长度mm</td><td colspan="5" class="green">+10,0</td><td class="num">6</td><td class="slash">/</td><td class="white">6</td><td colspan="10" class="white">抽查6处，全部合格</td><td class="white">100%</td></tr>
          <tr class="h11"><th>29</th><td rowspan="2" colspan="2" class="green">预留洞</td><td colspan="3" class="item">中心线位置mm</td><td colspan="5" class="green">10</td><td class="num">6</td><td class="slash">/</td><td class="white">6</td><td colspan="10" class="white">抽查6处，全部合格</td><td class="white">100%</td></tr>
          <tr class="h11"><th>30</th><td colspan="3" class="item">尺寸mm</td><td colspan="5" class="green">+10,0</td><td class="num">6</td><td class="slash">/</td><td class="white">6</td><td colspan="10" class="white">抽查6处，全部合格</td><td class="white">100%</td></tr>
          <tr class="h13"><th>31</th><td rowspan="2"></td><td rowspan="2" class="green"></td><td colspan="5" class="item">轴线位置</td><td colspan="5" class="green">5</td><td class="num">6</td><td class="slash">/</td><td class="white">6</td><td colspan="10" class="white">抽查6处，全部合格</td><td class="white">100%</td></tr>
          <tr class="h8"><th>32</th><td colspan="5" class="item">底模上表面标高</td><td colspan="5" class="green">±5</td><td class="num">6</td><td class="slash">/</td><td class="white">6</td><td colspan="10" class="white">抽查6处，全部合格</td><td class="white">100%</td></tr>
        </table>
      </div>
      <div class="sheet-scroll"><button aria-label="向上"><i class="tri north"></i></button><span class="thumb"></span><button aria-label="向下"><i class="tri south"></i></button></div>
    </div>
    <div class="sheet-tabs">
      <button aria-label="首页"><svg viewBox="0 0 8 8"><path d="M1 1h1v6H1zM7 1v6L3 4z"/></svg></button>
      <button aria-label="上一页"><svg viewBox="0 0 8 8"><path d="M6 1v6L2 4z"/></svg></button>
      <button aria-label="下一页"><svg viewBox="0 0 8 8"><path d="M2 1v6l4-3z"/></svg></button>
      <button aria-label="末页"><svg viewBox="0 0 8 8"><path d="M6 1h1v6H6zM1 1v6l4-3z"/></svg></button>
      <a href="#" class="active">主表</a>
      <a href="#">续表</a>
      <a href="#">原始记录1</a>
      <a href="#">原始记录2</a>
      <a href="#">原始记录3</a>
      <span class="grip"></span>
    </div>
  </section>

  <section class="doc">
    <div class="ruler">
      <svg width="389" height="12" viewBox="0 0 389 12">
        <defs><pattern id="ticks" x="14" width="54" height="9" patternUnits="userSpaceOnUse"><path d="M6.750 4v1M13.500 4v1M20.250 4v1M27 2v5M33.750 4v1M40.500 4v1M47.250 4v1" stroke="#999"/></pattern></defs>
        <path d="M0 0h10v9H0z" fill="#d0d0d0"/><path d="M3 2v4h4" fill="none" stroke="#555"/>
        <path d="M14 0h363v9H14z" fill="#fff"/><path d="M14 0h363v9H14z" fill="url(#ticks)"/>
        <path d="M377 0h12v9h-12z" fill="#bdbdbd"/>
        <g font-size="7"><text x="66" y="7">1</text><text x="120" y="7">2</text><text x="174" y="7">3</text><text x="228" y="7">4</text><text x="282" y="7">5</text><text x="336" y="7">6</text></g>
        <path d="M12 0h5v3l-2.500 2L12 3zM12 11V8l2.500-2L17 8v3z" fill="#fff" stroke="#888"/>
        <path d="M373 8l3-3 3 3z" fill="#fff" stroke="#888"/>
      </svg>
    </div>
    <div class="doc-body">
      <svg class="v-ruler" width="9" height="444" viewBox="0 0 9 444">
        <defs><pattern id="vticks" y="44" width="9" height="54" patternUnits="userSpaceOnUse"><path d="M4 6.750h1M4 13.500h1M4 20.250h1M2 27h5M4 33.750h1M4 40.500h1M4 47.250h1" stroke="#999"/></pattern></defs>
        <path d="M0 0h9v444H0z" fill="#fff"/><path d="M0 0h9v42H0z" fill="#bdbdbd"/><path d="M0 0h9v444H0z" fill="url(#vticks)"/>
        <g font-size="7"><text transform="translate(7 46) rotate(-90)">0</text><text transform="translate(7 100) rotate(-90)">1</text><text transform="translate(7 154) rotate(-90)">2</text><text transform="translate(7 208) rotate(-90)">3</text><text transform="translate(7 262) rotate(-90)">4</text><text transform="translate(7 316) rotate(-90)">5</text><text transform="translate(7 370) rotate(-90)">6</text><text transform="translate(7 424) rotate(-90)">7</text></g>
      </svg>
      <article class="page">
        <p>4&nbsp; 模板分项工程</p>
        <p>4.1&nbsp; 一般规定</p>
        <p class="clause">4.1.1</p>
        <p class="full">模板工程应编制施工方案。爬升式模板工程、工具式模板工程及高大模板支架工程的施工方案，应按有关规定</p>
        <p>进行技术论证。</p>
        <p class="clause">4.1.2&nbsp; 模板及支架应根据安装、使用和拆除工况进行设计，并应满足承载力、刚度和整体稳固性要求。</p>
        <p class="clause split"><span>4.1.3</span><span>模板及支架的拆除应符合现行国家标准《混凝土结构工程施工规范》GB</span></p>
        <p>50666的规定和施工方案的要求。</p>
        <p>4.2&nbsp; 模板安装</p>
        <p class="in">主控项目</p>
        <p class="clause split"><span>4.</span><span>2.1</span></p>
        <p class="full">模板及支架用材料的技术指标应符合国家现行有关标准的规定。进场时应抽样检验模板和支架材料的外观、规</p>
        <p>格和尺寸。</p>
        <p class="in">检查数量：按国家现行有关标准的规定确定。</p>
        <p class="in">检验方法：检查质量证明文件；观察，尺量。</p>
        <p class="clause">4.2.2&nbsp; 现浇混凝土结构模板及支架的安装质量，应符合国家现行有关标准的规定和施工方案的要求。</p>
        <p class="in">检查数量：按国家现行有关标准的规定确定。</p>
        <p class="in">检验方法：按国家现行有关标准的规定执行。</p>
        <p class="clause">4.2.3后浇带处的模板及支架应独立设置。</p>
        <p class="in">检查数量：全数检查。</p>
        <p class="in">检验方法：观察。</p>
        <p class="clause">4.2.4&nbsp; 支架竖杆或竖向模板安装在土层上时，应符合下列规定：</p>
        <p class="in">1&nbsp; 土层应坚实、平整，其承载力或密实度应符合施工方案的要求；</p>
        <p class="in">2应有防水、排水措施；对冻胀性土，应有预防冻融措施；</p>
        <p class="in">3支架竖杆下应有底座或垫板。</p>
        <p class="in">检查数量：全数检查。</p>
        <p class="in">检验方法：观察；检查土层密实度检测报告、土层承载力验算或现场检测报告。</p>
        <p class="in">一般项目</p>
        <p class="clause">4.2.5模板安装应符合下列规定：</p>
        <p class="in">1模板的接缝应严密；</p>
        <p class="in">2模板内不应有杂物、积水或冰雪等；</p>
        <p class="in">3模板与混凝土的接触面应平整、清洁；</p>
        <p class="in">4用作模板的地坪、胎膜等应平整、清洁，不应有影响构件质量的下沉、裂缝、起砂或起鼓；</p>
        <p class="in">5对清水混凝土及装饰混凝土构件，应使用能达到设计效果的模板。</p>
        <p class="in">检查数量：全数检查。</p>
        <p class="in">检验方法：观察。</p>
        <p class="clause">4.2.6</p>
        <p class="full">隔离剂的品种和涂刷方法应符合施工方案的要求。隔离剂不得影响结构性能及装饰施工；不得沾污钢筋、预应</p>
        <p>力筋、预埋件和混凝土接槎处；不得对环境造成污染。</p>
        <p class="in">检查数量：全数检查。</p>
        <p class="in">检验方法：检查质量证明文件；观察。</p>
      </article>
      <div class="vscroll"><i class="tri north"></i><span class="thumb"></span><i class="tri south"></i></div>
    </div>
    <div class="hscroll"><i class="tri west"></i><span class="thumb"></span><i class="tri east"></i></div>
  </section>

  <nav class="side">
    <a href="#" class="active">填表说明</a>
    <a href="#">范例</a>
    <a href="#">原始记录</a>
    <a href="#">示例数据</a>
    <a href="#">评定</a>
  </nav>
</main>

<footer class="status">加密锁: 插入</footer>
<div class="meter"><i></i></div>
</body>
</html>
```
FILE: styles.css
```css
* {
  box-sizing: border-box;
}

body {
  font-family: "Liberation Serif", "Noto Sans CJK SC", sans-serif;
  font-size: 7px;
  line-height: 9px;
  margin: 0;
  height: 100vh;
  display: flex;
  flex-direction: column;
  overflow: hidden;
  background: #fafafa;
  color: #222;
}

a {
  color: inherit;
  text-decoration: none;
}

button {
  font: inherit;
  color: inherit;
  margin: 0;
  padding: 0;
  border: 0;
  background: none;
}

svg {
  display: block;
  flex: none;
}

.sprite {
  position: absolute;
}

/* Title bar and menu */
.top {
  background: #229954;
  color: #fff;
  border-bottom: 1px solid #1c8748;
  font-family: "Noto Sans CJK SC", sans-serif;
}

.titlebar {
  display: flex;
  align-items: center;
  height: 18px;
  padding: 0 6px 0 4px;
  gap: 3px;
}

.cloud {
  width: 10px;
  height: 8px;
}

.win-buttons {
  display: flex;
  gap: 9px;
  margin-left: auto;
}

.win-buttons svg {
  width: 8px;
  height: 8px;
}

.menu {
  display: flex;
  height: 16px;
}

.menu > a {
  width: 39px;
  line-height: 17px;
  font-size: 8px;
  text-align: center;
}

.menu > .active {
  background: #fafafa;
  color: #229954;
}

.user {
  display: flex;
  align-items: center;
  gap: 6px;
  margin-left: auto;
  padding-right: 4px;
}

.logout {
  width: 34px;
  height: 11px;
  background: #fff;
  color: #229954;
}

/* Ribbon */
.ribbon {
  display: flex;
  height: 61px;
  padding: 7px 0 6px;
  background: #fafafa;
  border-bottom: 1px solid #cfcfcf;
  font-family: "Noto Sans CJK SC", sans-serif;
}

.group {
  display: flex;
  flex-direction: column;
  border-right: 1px solid #d5d5d5;
}

.tools {
  display: flex;
  height: 38px;
}

.group-name {
  text-align: center;
  color: #666;
  line-height: 9px;
}

.g-layout { width: 127px; }
.g-edit { width: 164px; }
.g-action { width: 69px; }
.g-clip { width: 63px; }
.g-font { width: 122px; }
.g-align { width: 93px; }
.g-rows { width: 75px; }
.g-border { width: 68px; }
.g-formula { width: 38px; }
.g-tool { width: 26px; }

.g-layout .tools { padding-left: 8px; gap: 9px; }
.g-edit .tools { padding-left: 4px; gap: 5px; }
.g-action .tools { padding-left: 4px; gap: 5px; }
.g-clip .tools { padding-left: 4px; gap: 7px; }
.g-font .tools { padding-left: 5px; gap: 4px; }
.g-align .tools { padding-left: 4px; gap: 1px; }
.g-border .tools { padding-left: 5px; }
.g-tool .tools, .g-formula .tools { justify-content: center; }

.big {
  display: flex;
  flex-direction: column;
  align-items: center;
  padding-top: 2px;
  min-width: 16px;
  gap: 1px;
  white-space: nowrap;
}

.big svg {
  width: 18px;
  height: 18px;
}

.caret {
  border: 2px solid transparent;
  border-top-color: #222;
  border-bottom: 0;
}

.stack {
  display: flex;
  flex-direction: column;
  justify-content: space-between;
}

.small {
  display: flex;
  align-items: center;
  gap: 2px;
  height: 12px;
  padding: 0 1px;
  white-space: nowrap;
  border: 1px solid transparent;
}

.small svg {
  width: 9px;
  height: 9px;
}

.small.on {
  background: #8fd4b1;
  border-color: #45a877;
}

.pair {
  display: flex;
  flex-direction: column;
  justify-content: space-around;
}

.select {
  position: relative;
  display: block;
  width: 57px;
  height: 12px;
}

.select select {
  appearance: none;
  width: 100%;
  height: 100%;
  padding: 0 2px;
  border: 1px solid #bbb;
  border-radius: 0;
  background: #fff;
  font: inherit;
  line-height: 9px;
  color: #222;
}

.select svg {
  position: absolute;
  top: 1px;
  right: 1px;
  width: 10px;
  height: 10px;
  background: #eee;
  border-left: 1px solid #ccc;
}

.stroke {
  position: absolute;
  top: 5px;
  left: 21px;
  width: 18px;
  border-top: 1px solid #555;
}

.icons {
  display: grid;
  flex: 1;
  justify-items: center;
  align-items: center;
}

.three { grid-template-columns: repeat(3, 1fr); }
.four { grid-template-columns: repeat(4, 1fr); }

.icons svg,
.border-buttons svg {
  width: 10px;
  height: 10px;
}

.letter {
  font: bold 9px/10px "Liberation Sans", sans-serif;
}

.letter i {
  font-family: "Liberation Mono", monospace;
}

.letter sup,
.letter sub {
  font-size: 5px;
  line-height: 0;
}

.letter s {
  text-decoration-color: #c33;
}

.border-buttons {
  display: flex;
  gap: 7px;
}

.border-buttons button {
  display: flex;
  align-items: center;
  gap: 1px;
}

.text {
  white-space: nowrap;
}

/* Work area */
.work {
  flex: 1;
  min-height: 0;
  display: grid;
  grid-template-columns: 264px 400px 1fr 19px;
  grid-template-rows: minmax(0, 1fr);
  border: 1px solid #6bb991;
  border-width: 0 1px;
}

.left {
  display: flex;
  flex-direction: column;
  min-width: 0;
  background: #fff;
}

.project {
  flex: 1;
  display: flex;
  flex-direction: column;
  min-height: 0;
}

.tree {
  list-style: none;
  margin: 0;
  padding: 0;
  display: grid;
  grid-auto-rows: 1fr;
  overflow: hidden;
}

.project-tree {
  height: 191px;
  margin-bottom: auto;
}

.template-tree {
  flex: 1;
  height: 124px;
}

.tree li {
  display: flex;
  align-items: center;
  padding-left: 6px;
  gap: 2px;
  min-width: 0;
}

.tree svg {
  width: 9px;
  height: 9px;
}

.tree a {
  flex: 1;
  padding-left: 2px;
  line-height: 11px;
  white-space: nowrap;
  overflow: hidden;
}

.tree .l1 { padding-left: 17px; }
.tree .l2 { padding-left: 29px; }
.tree .l3 { padding-left: 40px; }
.tree .l4 { padding-left: 51px; }
.tree .l5 { padding-left: 62px; }
.tree .l6 { padding-left: 74px; }
.tree .l7 { padding-left: 85px; }

.selected a {
  background: #d5efe1;
}

.arrow {
  width: 7px;
  height: 4px;
  flex: none;
  background: linear-gradient(#666, #666) center / 2px 4px no-repeat;
  clip-path: polygon(30% 0, 80% 50%, 30% 100%);
}

.arrow.open {
  background: #555;
  clip-path: polygon(80% 0, 80% 100%, 20% 100%);
}

.arrow.none {
  visibility: hidden;
}

.tri {
  border: 3px solid transparent;
  flex: none;
}

.north { border-top: 0; border-bottom-color: #999; }
.south { border-bottom: 0; border-top-color: #999; }
.west { border-left: 0; border-right-color: #bbb; }
.east { border-right: 0; border-left-color: #bbb; }

.hscroll {
  display: flex;
  align-items: center;
  gap: 3px;
  height: 9px;
  padding: 0 5px;
  background: #f4f4f4;
}

.hscroll .thumb {
  height: 7px;
  width: 218px;
  margin-right: auto;
  border: 1px solid #ccc;
  border-radius: 1px;
  background: #fbfbfb;
}

.vscroll {
  display: flex;
  flex-direction: column;
  align-items: center;
  gap: 3px;
  width: 9px;
  padding: 3px 0;
  background: #f4f4f4;
}

.vscroll .thumb {
  width: 7px;
  height: 72px;
  margin-bottom: auto;
  border: 1px solid #ccc;
  border-radius: 1px;
  background: #fbfbfb;
}

.panel-tab {
  height: 22px;
  padding: 4px 2px 0;
  background: #e7e7e7;
  border-top: 1px solid #d6d6d6;
}

.panel-tab a {
  display: block;
  width: 33px;
  line-height: 17px;
  font-size: 8px;
  text-align: center;
  background: #fff;
  color: #229954;
}

.template-body {
  display: flex;
}

/* Spreadsheet */
.sheet {
  display: flex;
  flex-direction: column;
  min-height: 0;
  padding-left: 1px;
  border-left: 1px solid #e0e0e0;
  border-right: 2px dotted #777;
  background: #dfdfdf;
}

.sheet-view {
  flex: 1;
  display: flex;
  min-height: 0;
}

.sheet-clip {
  flex: 1;
  overflow: hidden;
  border-left: 1px solid #777;
  border-top: 1px solid #777;
}

.grid {
  table-layout: fixed;
  width: 384px;
  border-spacing: 0;
  font-family: "Liberation Mono", "Noto Sans CJK SC", monospace;
  line-height: 7px;
  color: #111;
}

.grid th,
.grid td {
  padding: 0;
  text-align: center;
  white-space: nowrap;
}

.grid th {
  font-weight: normal;
  background: #f3f3f3;
  border-bottom: 1px solid #bbb;
  border-right: 2px solid #555;
}

.grid .letters th {
  border-right: 1px solid #bbb;
  overflow: hidden;
}

.grid .corner {
  background: linear-gradient(135deg, #f3f3f3 80%, #aaa 80%);
}

.grid .plain th {
  border-right: 2px solid #ccc;
}

.grid .current {
  font-weight: bold;
}

.grid td {
  border-right: 1px solid #111;
  border-bottom: 1px solid #111;
  background: #dfdfdf;
  vertical-align: middle;
}

.grid .plain td {
  border: 0;
  text-align: right;
}

.grid .plain .box {
  background: #fff;
  border-bottom: 1px solid #555;
  text-align: center;
}

.grid .plain .title {
  font: 13px/14px "Noto Sans CJK SC", sans-serif;
  text-align: center;
}

.grid .last td {
  border-bottom: 1px solid #111;
}

.grid .h3 th, .grid .h3 td, .grid .h4 th, .grid .h4 td {
  line-height: 0;
}

.grid .yellow { background: #ffffa0; }
.grid .cyan { background: #c6ffff; }
.grid .white { background: #fff; }
.grid .green { background: #9be84c; }

.grid .item {
  background: #9be84c;
  text-align: left;
  padding-left: 2px;
}

.grid .num {
  background: #fff;
  border-right: 0;
}

.grid .slash {
  border-right: 0;
}

.grid .general {
  vertical-align: bottom;
  padding-bottom: 35px;
}

.grid .cursor {
  background: linear-gradient(90deg, #aaa 2px, #5a2d9c 2px, #5a2d9c 4px, #9be84c 4px);
}

.upright {
  display: inline-block;
  writing-mode: vertical-rl;
  text-align: left;
}

.combo {
  display: flex;
  align-items: center;
  height: 17px;
}

.combo span {
  flex: 1;
}

.combo button {
  display: flex;
  align-items: center;
  justify-content: center;
  width: 9px;
  height: 17px;
  background: #eee;
  border-left: 1px solid #999;
}

.h3 { height: 3px; }
.h4 { height: 4px; }
.h8 { height: 8px; }
.h9 { height: 9px; }
.h11 { height: 11px; }
.h13 { height: 13px; }
.h14 { height: 14px; }
.h15 { height: 15px; }
.h16 { height: 16px; }
.h17 { height: 17px; }
.h18 { height: 18px; }
.h19 { height: 19px; }
.h20 { height: 20px; }
.h21 { height: 21px; }
.h29 { height: 29px; }

.w4 { width: 4px; }
.w6 { width: 6px; }
.w8 { width: 8px; }
.w9 { width: 9px; }
.w10 { width: 10px; }
.w11 { width: 11px; }
.w12 { width: 12px; }
.w13 { width: 13px; }
.w15 { width: 15px; }
.w16 { width: 16px; }
.w17 { width: 17px; }
.w20 { width: 20px; }
.w21 { width: 21px; }
.w25 { width: 25px; }
.w26 { width: 26px; }
.w32 { width: 32px; }

.sheet-scroll {
  width: 11px;
  display: flex;
  flex-direction: column;
  background: #f4f4f4;
}

.sheet-scroll button {
  display: flex;
  align-items: center;
  justify-content: center;
  height: 11px;
  background: #eee;
  border: 1px solid #ccc;
}

.sheet-scroll .north { border-bottom-color: #111; }
.sheet-scroll .south { border-top-color: #111; }

.sheet-scroll .thumb {
  height: 344px;
  margin-bottom: auto;
  background: #ececec;
  border: 1px solid #fff;
  border-right-color: #999;
  border-bottom-color: #777;
}

.sheet-tabs {
  display: flex;
  height: 11px;
  background: #e9e9e9;
  border: 1px solid #999;
  border-width: 1px 0 1px 1px;
}

.sheet-tabs button {
  width: 10px;
  border-right: 1px solid #bbb;
}

.sheet-tabs svg {
  width: 7px;
  height: 7px;
  margin: auto;
}

.sheet-tabs a {
  padding: 0 4px;
  margin-left: 2px;
  line-height: 9px;
  background: linear-gradient(75deg, transparent calc(100% - 3px), #333 calc(100% - 3px), #333 calc(100% - 2px), transparent calc(100% - 2px));
}

.sheet-tabs .active {
  background-color: #fff;
}

.grip {
  width: 10px;
  margin-left: auto;
  background: linear-gradient(135deg, #eee 60%, #222 60%);
}

/* Document */
.doc {
  display: flex;
  flex-direction: column;
  min-width: 0;
  min-height: 0;
  background: #e5e5e5;
}

.ruler {
  height: 18px;
  padding: 4px 0 0 5px;
  overflow: hidden;
}

.doc-body {
  flex: 1;
  display: flex;
  min-height: 0;
  overflow: hidden;
  padding-left: 7px;
}

.v-ruler {
  margin-top: 4px;
}

.page {
  flex: 1;
  min-width: 0;
  margin: 4px 0 0 2px;
  padding: 41px 6px 0 1px;
  overflow: hidden;
  background: #fff;
  color: #1c1010;
}

.page p {
  margin: 0;
  line-height: 10px;
  height: 10px;
  white-space: nowrap;
}

.page .clause {
  line-height: 9px;
  height: 9px;
}

.page .in {
  padding-left: 8px;
}

.page .full {
  white-space: normal;
  text-align-last: justify;
}

.page .split {
  display: flex;
  justify-content: space-between;
}

.doc .vscroll .thumb {
  height: 108px;
}

.doc .hscroll {
  height: 10px;
  padding: 0 12px 0 19px;
}

.doc .hscroll .thumb {
  width: 274px;
  margin-left: 38px;
}

/* Side tabs */
.side {
  display: flex;
  flex-direction: column;
  border-left: 1px solid #ccc;
}

.side a {
  display: flex;
  align-items: center;
  justify-content: center;
  height: 56px;
  writing-mode: vertical-rl;
  font-size: 9px;
  background: linear-gradient(90deg, #fafafa, #ececec);
  border-bottom: 1px solid #ccc;
}

.side .active {
  background: #d5efe1;
  border-color: #8fd4b1;
}

/* Status bar */
.status {
  height: 14px;
  padding-left: 2px;
  line-height: 13px;
  border-top: 1px solid #ccc;
  border-bottom: 1px solid #6bb991;
  color: #000;
}

.meter {
  position: absolute;
  right: 0;
  bottom: 23px;
  width: 6px;
  height: 33px;
  padding: 14px 0 0 2px;
  background: #454d58;
  border-radius: 2px 0 0 2px;
}

.meter i {
  display: block;
  width: 3px;
  height: 15px;
  background: linear-gradient(#b8b04a, #3fa66a);
}
```
